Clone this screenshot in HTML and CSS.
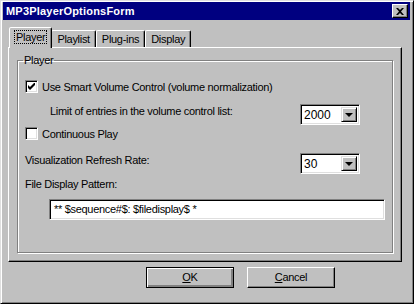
FILE: index.html
```html
<!DOCTYPE html>
<html lang="en">
<head>
    <meta charset="UTF-8">
    <title>MP3PlayerOptionsForm</title>
    <link rel="stylesheet" href="styles.css">
</head>
<body>
    <div class="window">
        <div class="titlebar">
            <span class="title">MP3PlayerOptionsForm</span>
            <span class="close-btn">
                <svg width="8" height="7" viewBox="0 0 8 7">
                    <path d="M0 0h2l2 2l2-2h2l-3 3.5l3 3.5h-2l-2-2l-2 2h-2l3-3.5z" fill="#000"/>
                </svg>
            </span>
        </div>

        <div class="tabs">
            <div class="tab active"><span class="focus">Player</span></div>
            <div class="tab">Playlist</div>
            <div class="tab">Plug-ins</div>
            <div class="tab">Display</div>
        </div>

        <div class="panel">
            <fieldset class="group">
                <legend>Player</legend>

                <div class="row check-row">
                    <span class="checkbox">
                        <svg width="7" height="7" viewBox="0 0 7 7">
                            <path d="M0 2v3l2 2l5-5v-3l-5 5z" fill="#000"/>
                        </svg>
                    </span>
                    <span>Use Smart Volume Control (volume normalization)</span>
                </div>

                <div class="row combo-row indent">
                    <span class="label">Limit of entries in the volume control list:</span>
                    <div class="combo">
                        <span class="combo-value">2000</span>
                        <span class="combo-btn"><span class="arrow"></span></span>
                    </div>
                </div>

                <div class="row check-row second">
                    <span class="checkbox"></span>
                    <span>Continuous Play</span>
                </div>

                <div class="row combo-row refresh">
                    <span class="label">Visualization Refresh Rate:</span>
                    <div class="combo">
                        <span class="combo-value">30</span>
                        <span class="combo-btn"><span class="arrow"></span></span>
                    </div>
                </div>

                <div class="row pattern-label">File Display Pattern:</div>

                <div class="textbox">** $sequence#$: $filedisplay$ *</div>
            </fieldset>
        </div>

        <div class="buttons">
            <div class="button default"><u>O</u>K</div>
            <div class="button"><u>C</u>ancel</div>
        </div>
    </div>
</body>
</html>
```

FILE: styles.css
```css
body {
    margin: 0;
    font-family: "Liberation Sans", Arial, sans-serif;
    font-size: 11px;
    letter-spacing: -0.3px;
    color: #000;
    background: #c0c0c0;
}
.window {
    width: 414px;
    height: 304px;
    box-sizing: border-box;
    background: #c0c0c0;
    border: 1px solid;
    border-color: #dfdfdf #000 #000 #dfdfdf;
    box-shadow: inset 1px 1px #fff, inset -1px -1px #808080;
    padding: 1px 3px 2px 2px;
}
.titlebar {
    height: 18px;
    background: #000080;
    display: flex;
    align-items: center;
    justify-content: space-between;
    padding: 0 2px 0 3px;
}
.title {
    color: #fff;
    font-weight: bold;
    font-size: 11px;
    letter-spacing: 0.2px;
}
.close-btn {
    width: 16px;
    height: 14px;
    box-sizing: border-box;
    background: #c0c0c0;
    border: 1px solid;
    border-color: #fff #000 #000 #fff;
    box-shadow: inset -1px -1px #808080;
    display: flex;
    align-items: center;
    justify-content: center;
}

/* tab strip */
.tabs {
    display: flex;
    align-items: flex-end;
    height: 20px;
    margin: 7px 0 0 6px;
    padding-left: 2px;
}
.tab {
    height: 17px;
    box-sizing: border-box;
    padding: 2px 5px 0 5px;
    border: 1px solid;
    border-bottom: none;
    border-color: #fff #000 transparent #fff;
    box-shadow: inset -1px 0 #808080;
    border-radius: 2px 2px 0 0;
}
.tab.active {
    margin: 0 -1px -1px -2px;
    padding: 3px 4px 0 4px;
    position: relative;
    z-index: 1;
    background: #c0c0c0;
    height: 21px;
}
.focus {
    border: 1px dotted #000;
    padding: 0 1px;
}

.panel {
    width: 394px;
    height: 215px;
    box-sizing: border-box;
    margin-left: 5px;
    border: 1px solid;
    border-color: #fff #000 #000 #fff;
    box-shadow: inset -1px -1px #808080;
    padding: 6px 8px 8px 8px;
}
.group {
    margin: 0;
    height: 100%;
    box-sizing: border-box;
    border: 1px solid #808080;
    box-shadow: 1px 1px #fff, inset 1px 1px #fff;
    padding: 0 0 0 7px;
}
.group legend {
    padding: 0 1px;
    margin-left: -2px;
}

.row {
    display: flex;
    align-items: center;
}
.check-row {
    gap: 4px;
    margin-top: 14px;
}
.check-row.second {
    margin-top: 2px;
}
.checkbox {
    width: 13px;
    height: 13px;
    box-sizing: border-box;
    background: #fff;
    border: 1px solid;
    border-color: #808080 #fff #fff #808080;
    box-shadow: inset 1px 1px #000, inset -1px -1px #dfdfdf;
    display: flex;
    align-items: center;
    justify-content: center;
}
.combo-row {
    justify-content: space-between;
    align-items: flex-start;
    margin-right: 32px;
    margin-top: 11px;
}
.combo-row .label {
    padding-top: 1px;
}
.indent {
    padding-left: 25px;
}
.refresh {
    margin-top: 13px;
}
.combo {
    width: 60px;
    height: 21px;
    box-sizing: border-box;
    background: #fff;
    border: 1px solid;
    border-color: #808080 #fff #fff #808080;
    box-shadow: inset 1px 1px #000, inset -1px -1px #dfdfdf;
    display: flex;
    padding: 2px;
}
.combo-value {
    flex: 1;
    font-size: 12px;
    letter-spacing: 0;
    padding: 1px 0 0 1px;
}
.combo-btn {
    width: 16px;
    box-sizing: border-box;
    background: #c0c0c0;
    border: 1px solid;
    border-color: #dfdfdf #000 #000 #dfdfdf;
    box-shadow: inset 1px 1px #fff, inset -1px -1px #808080;
    display: flex;
    align-items: center;
    justify-content: center;
}
.arrow {
    width: 0;
    height: 0;
    border-left: 4px solid transparent;
    border-right: 4px solid transparent;
    border-top: 4px solid #000;
}
.pattern-label {
    margin-top: 4px;
}
.textbox {
    width: 336px;
    height: 21px;
    box-sizing: border-box;
    margin: 9px 0 0 24px;
    background: #fff;
    border: 1px solid;
    border-color: #808080 #fff #fff #808080;
    box-shadow: inset 1px 1px #000, inset -1px -1px #dfdfdf;
    padding: 3px 0 0 4px;
}

/* bottom buttons */
.buttons {
    display: flex;
    gap: 13px;
    margin-top: 5px;
    padding-left: 143px;
}
.button {
    width: 88px;
    height: 21px;
    box-sizing: border-box;
    border: 1px solid;
    border-color: #fff #000 #000 #fff;
    box-shadow: inset -1px -1px #808080;
    text-align: center;
    line-height: 18px;
}
.button.default {
    border: 1px solid #000;
    box-shadow: inset 1px 1px #fff, inset -2px -2px #808080;
}
```
